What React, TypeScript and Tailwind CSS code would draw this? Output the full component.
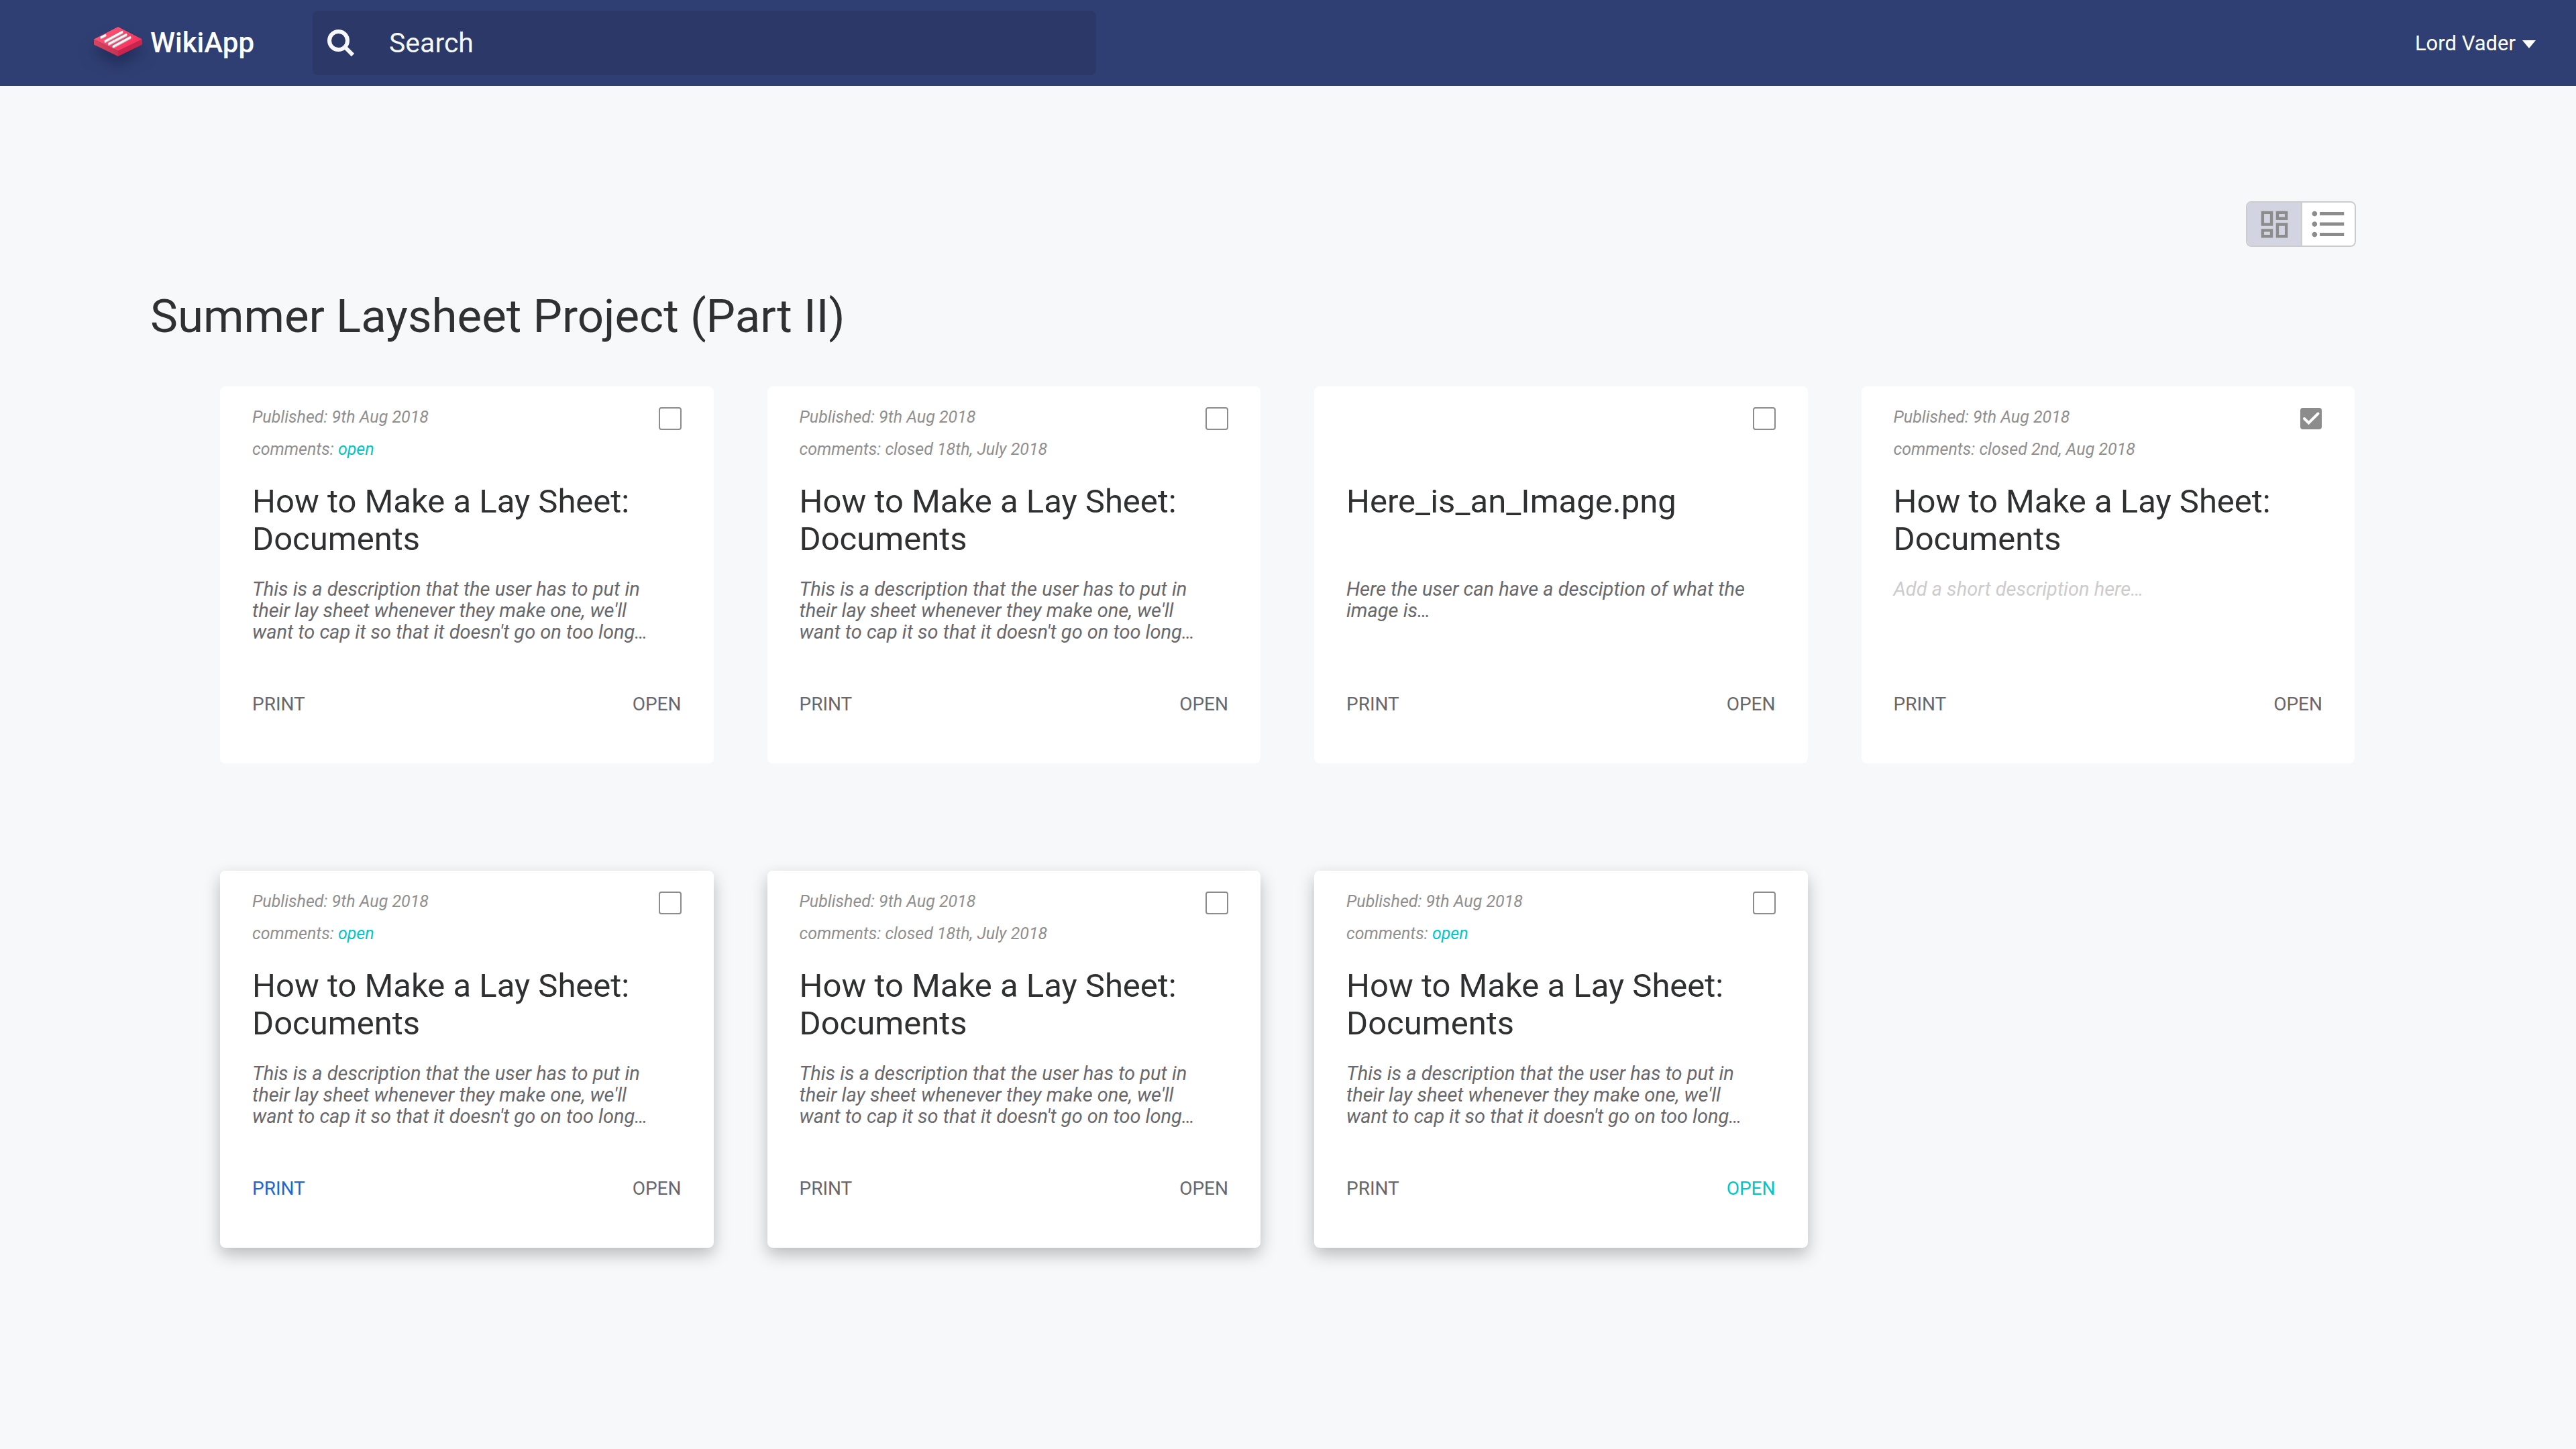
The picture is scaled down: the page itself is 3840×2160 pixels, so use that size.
import { useState } from "react";
import { MdFormatListBulleted, MdOutlineDashboard } from "react-icons/md";

type Doc = {
  id: number;
  title: string;
  published?: string;
  comments?: string;
  commentsOpen?: boolean;
  description?: string;
  checked?: boolean;
  raised?: boolean;
  active?: "print" | "open";
};

const LAY_SHEET = "How to Make a Lay Sheet: Documents";
const LONG_TEXT =
  "This is a description that the user has to put in their lay sheet whenever they make one, we'll want to cap it so that it doesn't go on too long…";

const DOCS: Doc[] = [
  { id: 1, title: LAY_SHEET, published: "9th Aug 2018", comments: "open", commentsOpen: true, description: LONG_TEXT },
  { id: 2, title: LAY_SHEET, published: "9th Aug 2018", comments: "closed 18th, July 2018", description: LONG_TEXT },
  { id: 3, title: "Here_is_an_Image.png", description: "Here the user can have a desciption of what the image is…" },
  { id: 4, title: LAY_SHEET, published: "9th Aug 2018", comments: "closed 2nd, Aug 2018", checked: true },
  { id: 5, title: LAY_SHEET, published: "9th Aug 2018", comments: "open", commentsOpen: true, description: LONG_TEXT, raised: true, active: "print" },
  { id: 6, title: LAY_SHEET, published: "9th Aug 2018", comments: "closed 18th, July 2018", description: LONG_TEXT, raised: true },
  { id: 7, title: LAY_SHEET, published: "9th Aug 2018", comments: "open", commentsOpen: true, description: LONG_TEXT, raised: true, active: "open" },
];

function Logo() {
  return (
    <svg className="h-14 w-18 overflow-visible drop-shadow-[0_14px_10px_rgba(20,30,70,0.5)]" viewBox="0 0 72 56" aria-hidden="true">
      <defs>
        <linearGradient id="logo-top" x1="0" y1="0" x2="1" y2="0.6">
          <stop offset="0" stopColor="#fb6079" />
          <stop offset="1" stopColor="#f5305c" />
        </linearGradient>
        <linearGradient id="logo-left" x1="0" y1="0" x2="1" y2="0">
          <stop offset="0" stopColor="#d94561" />
          <stop offset="1" stopColor="#c73253" />
        </linearGradient>
      </defs>
      <g transform="translate(0 4)">
        <path d="M0 18.500 36 36v8L0 26.500z" fill="url(#logo-left)" />
        <path d="M72 18.500 36 36v8l36-17.500z" fill="#c7254b" />
        <path d="M36 0l36 18.500L36 36 0 18.500z" fill="url(#logo-top)" />
        <g strokeLinecap="round" fill="none">
          <g stroke="#cfc4ca" strokeWidth="3">
            <path d="M11 16.500l6-3M17 22.500 42 9M22.500 26.500 48 13M29 30.500 54 17" />
          </g>
          <g stroke="#ffffff" strokeWidth="3">
            <path d="M11 15.500l6-3M17 21 42 7.500M22.500 25 48 11.500M29 29 54 15.500" />
          </g>
        </g>
      </g>
    </svg>
  );
}

function SearchIcon() {
  return (
    <svg className="size-10 shrink-0" viewBox="0 0 40 40" fill="none" stroke="#f7f8fa" strokeWidth="6" aria-hidden="true">
      <circle cx="16.500" cy="16.500" r="13.500" />
      <path d="M26 26l12 12" />
    </svg>
  );
}

function Header() {
  return (
    <header className="flex h-32 items-center bg-[#303f73] pr-15 pl-35 text-white">
      <a href="#" className="flex w-[326px] shrink-0 items-center gap-3">
        <Logo />
        <span className="text-[42px] leading-none font-medium">WikiApp</span>
      </a>
      <label className="flex h-24 w-full max-w-[1168px] items-center gap-13 rounded-lg bg-[#2b3868] px-[22px]">
        <SearchIcon />
        <input
          type="text"
          aria-label="Search"
          placeholder="Search"
          className="min-w-0 flex-1 bg-transparent text-[41px] leading-12 outline-none placeholder:text-[#f7f8fa]"
        />
      </label>
      <button type="button" className="ml-auto flex items-center gap-[10px] text-[31px] leading-none whitespace-nowrap">
        Lord Vader
        <svg className="mt-1 h-3 w-5" viewBox="0 0 20 12" fill="currentColor" aria-hidden="true">
          <path d="M0 0h20L10 12z" />
        </svg>
      </button>
    </header>
  );
}

function ViewToggle() {
  return (
    <div className="flex h-17 w-41 overflow-hidden rounded-lg border-2 border-[#cccccc] bg-white text-[#8c8c8c]">
      <button type="button" aria-label="Grid view" aria-pressed="true" className="flex w-[82px] items-center justify-center border-r-2 border-[#cccccc] bg-[#d2d4e1]">
        <MdOutlineDashboard size={53} />
      </button>
      <button type="button" aria-label="List view" aria-pressed="false" className="flex flex-1 items-center justify-center">
        <MdFormatListBulleted size={62} />
      </button>
    </div>
  );
}

function Card({ doc }: { doc: Doc }) {
  const [checked, setChecked] = useState(!!doc.checked);
  return (
    <article className={`flex flex-col rounded-lg bg-white px-12 pt-[22px] pb-[72px] ${doc.raised ? "shadow-[0_10px_24px_rgba(0,0,0,0.25)]" : ""}`}>
      <div className="flex items-start justify-between">
        <div className="min-h-24 text-[25px] text-[#8f8f8f] italic">
          {doc.published && <p className="leading-12">Published: {doc.published}</p>}
          {doc.comments && (
            <p className="leading-12">
              comments: <span className={doc.commentsOpen ? "text-[#00c5c9]" : ""}>{doc.comments}</span>
            </p>
          )}
        </div>
        <label className="relative mt-[9px] grid size-[34px] place-items-center">
          <input
            type="checkbox"
            aria-label={`Select ${doc.title}`}
            checked={checked}
            onChange={(e) => setChecked(e.target.checked)}
            className="block size-[34px] appearance-none rounded-sm border-2 border-[#8c8c8c] bg-white checked:size-8 checked:bg-[#8c8c8c]"
          />
          {checked && (
            <svg className="pointer-events-none absolute inset-0" viewBox="0 0 34 34" fill="none" stroke="#ffffff" strokeWidth="4" strokeLinecap="round" aria-hidden="true">
              <path d="M7 17l6.500 6.500L27.500 9.500" />
            </svg>
          )}
        </label>
      </div>
      <h2 className="mt-[26px] min-h-28 text-[49px] leading-14 text-[#2f3032]">{doc.title}</h2>
      <p className={`mt-[30px] min-h-24 pr-6 text-[29px] leading-8 italic ${doc.description ? "text-[#68686c]" : "text-[#cccccc]"}`}>
        {doc.description ?? "Add a short description here…"}
      </p>
      <div className="mt-19 flex justify-between text-[28px] leading-8 text-[#68686c]">
        <button type="button" className={doc.active === "print" ? "text-[#1f66d1]" : ""}>PRINT</button>
        <button type="button" className={doc.active === "open" ? "text-[#00c5c9]" : ""}>OPEN</button>
      </div>
    </article>
  );
}

export default function App() {
  return (
    <div className="min-h-screen bg-[#f7f8fa] font-['Roboto',sans-serif]">
      <Header />
      <main className="pt-43 pb-40">
        <div className="flex justify-end pr-82">
          <ViewToggle />
        </div>
        <h1 className="mt-16 pl-56 text-[69px] leading-20 text-[#2f3032]">Summer Laysheet Project (Part II)</h1>
        <section className="mt-16 grid grid-cols-4 gap-x-20 gap-y-40 pr-[330px] pl-82">
          {DOCS.map((doc) => (
            <Card key={doc.id} doc={doc} />
          ))}
        </section>
      </main>
    </div>
  );
}
